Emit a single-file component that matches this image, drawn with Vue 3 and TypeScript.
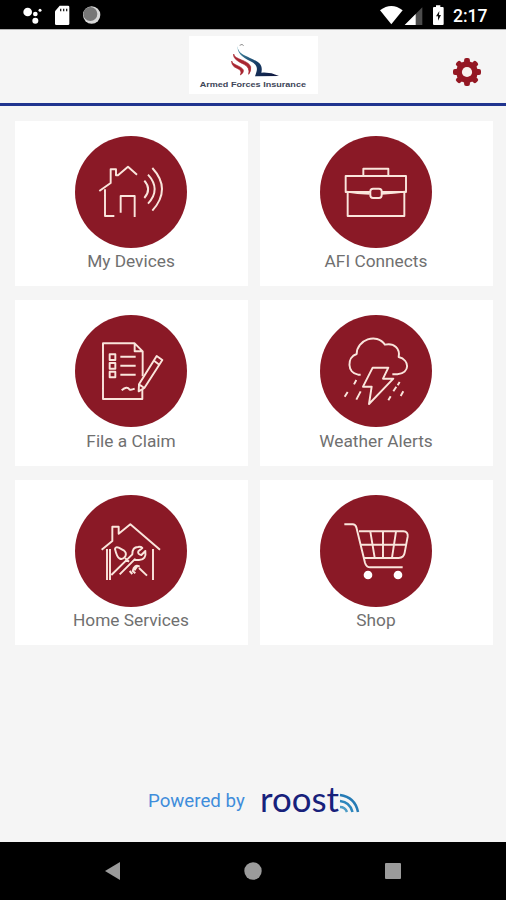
<script setup lang="ts">
interface Tile {
  id: string
  label: string
  viewBox: string
}

const tiles: Tile[] = [
  { id: 'devices', label: 'My Devices', viewBox: '15 16 336 336' },
  { id: 'connects', label: 'AFI Connects', viewBox: '15 16 336 336' },
  { id: 'claim', label: 'File a Claim', viewBox: '15 16 336 336' },
  { id: 'weather', label: 'Weather Alerts', viewBox: '15 16 336 336' },
  { id: 'services', label: 'Home Services', viewBox: '15 12 336 336' },
  { id: 'shop', label: 'Shop', viewBox: '15 12 336 336' },
]
</script>

<template>
  <div class="screen">
    <div class="status">
      <svg class="status-left" width="110" height="29" viewBox="0 0 330 87">
        <g fill="#fff">
          <circle cx="83" cy="36" r="13" />
          <circle cx="106" cy="42" r="7" />
          <circle cx="120" cy="31" r="4.5" />
          <circle cx="106" cy="62" r="9" />
          <path d="M179 17h25q4 0 4 4v50q0 4-4 4h-35q-4 0-4-4V34z" />
        </g>
        <path d="M182 26v8M191 26v8M200 26v8" stroke="#222" stroke-width="4" />
        <circle cx="275" cy="45" r="26" fill="#d8d8d8" />
        <circle cx="271" cy="42" r="21" fill="#777" />
      </svg>
      <svg class="status-icons" width="66" height="29" viewBox="30 0 198 87">
        <path d="M30 31Q64 5 98 31L64 73z" fill="#fff" />
        <path d="M157 22V75H104z" fill="#4c4c4c" />
        <path d="M137 42V75H104z" fill="#fff" />
        <path d="M198 16h13v5h7q3 0 3 3v48q0 3-3 3h-26q-3 0-3-3V24q0-3 3-3h6z" fill="#fff" />
        <path d="M208 33l-10 16h6v13l9-17h-6z" fill="#111" />
      </svg>
      <span class="clock">2:17</span>
    </div>

    <header class="header">
      <div class="brand">
        <svg width="128" height="57" viewBox="0 0 384 171">
          <defs>
            <linearGradient id="wave" x1="0" y1="0" x2="1" y2="1">
              <stop offset="0" stop-color="#4d96aa" />
              <stop offset=".5" stop-color="#173f68" />
              <stop offset="1" stop-color="#10143c" />
            </linearGradient>
          </defs>
          <path d="M152 28q8-6 12 1" fill="none" stroke="#777" stroke-width="2.5" />
          <path d="M146 31C147 52 164 57 183 66C213 79 222 87 217 110Q244 108 270 120L198 121C203 106 211 92 190 79C171 69 143 56 146 31Z" fill="url(#wave)" />
          <path d="M134 54C136 71 178 72 185 92Q187 105 179 115Q184 95 165 85C150 78 131 68 134 54Z" fill="#a82631" stroke="#a82631" stroke-width="2" />
          <path d="M128 75C130 87 158 90 163 102Q165 111 154 117Q161 103 144 97Q127 90 128 75Z" fill="#a82631" stroke="#a82631" stroke-width="2" />
          <text x="32" y="154" textLength="319" lengthAdjust="spacingAndGlyphs" class="brand-text">Armed Forces Insurance</text>
        </svg>
      </div>
      <svg class="gear" width="28" height="28" viewBox="-14 -14 28 28">
        <g fill="#941823">
          <circle r="10.8" />
          <rect v-for="n in 8" :key="n" x="-2.9" y="-14" width="5.8" height="7" rx="2" :transform="`rotate(${n * 45})`" />
        </g>
        <circle r="5.1" fill="#f8f3ee" />
      </svg>
    </header>

    <main class="grid">
      <section v-for="tile in tiles" :key="tile.id" class="tile">
        <svg class="disc" :viewBox="tile.viewBox">
          <g v-if="tile.id === 'devices'">
            <path d="M88 181L122 157V116H138V134H144L174 108L201 132M105 176V256H133M152 246V196H194V259" />
            <path d="M223 150Q246 176 223 202M234 132Q274 176 234 219M247 112Q305 175 247 240" />
          </g>
          <g v-else-if="tile.id === 'connects'">
            <path d="M145 136V114H220V136M92 136H273V184H92ZM98 184V256H268V184" />
            <path d="M94 183Q126 189 164 189M200 189Q238 188 271 183" />
            <rect x="166" y="174" width="34" height="28" rx="8" class="mask" />
          </g>
          <g v-else-if="tile.id === 'claim'">
            <path d="M217 236V268H99V101H194L218 125V200M194 102V125H217" />
            <path d="M119 134h17v17h-17zM119 160h17v17h-17zM119 186h17v17h-17zM151 141H197M151 168H197M151 195H197" />
            <path d="M155 242Q171 228 178 239Q183 242 194 237" />
            <path d="M207 224L260 139L277 151L223 235L206 245ZM207 224L223 235M250 152L268 165" class="mask" />
          </g>
          <g v-else-if="tile.id === 'weather'">
            <path d="M137 195H129C96 189 95 143 125 133C125 91 185 68 210 105C238 99 256 117 251 142C285 151 286 190 247 194H232" />
            <path d="M173 174H220L204 207H235L162 283L170 231H144Z" />
            <path d="M124 211L117 224M98 247L89 261M137 245L124 270M254 217L248 227M244 231L235 245M227 260L220 272M265 245L257 259" />
          </g>
          <g v-else-if="tile.id === 'services'">
            <path d="M95 176L127 150V107H146V128L181 100L270 176M111 174V267M120 174V267M249 174V267" />
            <path d="M135 174Q137 166 146 170L161 178Q171 186 166 196Q158 208 148 202Q141 199 135 174Z" />
            <path d="M124 252L187 190Q187 168 204 168Q212 166 217 171L205 181Q202 190 214 192L226 180Q230 206 207 207Q199 208 194 205L149 250M165 201L177 212M207 231L231 254M179 240L187 249" />
            <path d="M209 227Q193 218 188 240L196 247M203 224L193 238" />
          </g>
          <g v-else>
            <path d="M88 100H113Q121 100 124 109L150 215Q154 229 166 229H263M132 121H265Q280 122 278 137L269 185Q267 200 251 201H149M139 161H274M166 122L179 200M204 122V200M243 122L231 200" />
            <circle cx="159" cy="252" r="13" class="wheel" />
            <circle cx="249" cy="252" r="13" class="wheel" />
          </g>
        </svg>
        <span class="label">{{ tile.label }}</span>
      </section>
    </main>

    <footer class="powered">
      <span class="powered-text">Powered by</span>
      <svg width="104" height="46" viewBox="0 0 104 46">
        <text x="-1" y="34" textLength="79" lengthAdjust="spacingAndGlyphs" class="roost">roost</text>
        <g fill="none" stroke="#2b86bd" stroke-width="2.5">
          <path d="M79 17Q94 19 97 34" stroke="#267bb5" />
          <path d="M79 23Q89 24 91.500 34" />
          <path d="M79 29Q84 29 86 34" stroke="#4d9cc6" />
        </g>
      </svg>
    </footer>

    <nav class="nav">
      <svg width="16" height="18" viewBox="0 0 16 18"><path d="M0 9L15 0V18Z" /></svg>
      <svg width="18" height="18" viewBox="0 0 18 18"><circle cx="9" cy="9" r="8.700" /></svg>
      <svg width="16" height="16" viewBox="0 0 16 16"><rect width="16" height="16" rx="1" /></svg>
    </nav>
  </div>
</template>

<style>
body { margin: 0; }
</style>

<style scoped>
.screen {
  display: flex;
  flex-direction: column;
  box-sizing: border-box;
  width: 506px;
  height: 900px;
  background: #f5f5f5;
  font-family: Roboto, "Liberation Sans", sans-serif;
  overflow: hidden;
}
.status {
  display: flex;
  align-items: center;
  flex: none;
  height: 29px;
  background: #000;
  border-bottom: 1px solid #b0b0b0;
}
.status-icons { margin-left: 270px; }
.status-left { margin: 0; }
.clock {
  margin-left: 7px;
  padding-top: 3px;
  color: #fff;
  font-size: 17.500px;
  font-weight: 500;
  line-height: 20px;
}
.header {
  display: grid;
  grid-template-columns: 1fr 128px 1fr;
  flex: none;
  box-sizing: border-box;
  height: 76px;
  padding-top: 6px;
  border-bottom: 3px solid #20348f;
}
.brand {
  grid-column: 2;
  width: 129px;
  height: 58px;
  background: #fff;
}
.brand-text {
  font: 700 19px "Liberation Sans", sans-serif;
  fill: #3d4557;
}
.gear {
  justify-self: end;
  margin: 22px 25px 0 0;
}
.grid {
  display: grid;
  grid-template-columns: 233px 233px;
  grid-auto-rows: 165.500px;
  gap: 14px 12px;
  padding: 14.500px 0 0 15px;
  flex: none;
}
.tile {
  display: flex;
  flex-direction: column;
  align-items: center;
  box-sizing: border-box;
  padding-right: 1px;
  background: #fff;
}
.disc {
  width: 112px;
  height: 112px;
  margin-top: 15px;
  border-radius: 50%;
  background: #8a1926;
  fill: none;
  stroke: #fae5dc;
  stroke-width: 5.800;
  stroke-linejoin: round;
}
.mask { fill: #8a1926; }
.wheel { fill: #fff; stroke: none; }
.label {
  margin-top: 2.500px;
  color: #707070;
  font-size: 17.300px;
  line-height: 22px;
}
.powered {
  display: flex;
  align-items: center;
  flex: none;
  height: 46px;
  margin: auto 0 18px 148px;
}
.powered-text {
  width: 97px;
  margin-right: 16px;
  color: #3f8ddb;
  font-size: 18.700px;
  white-space: nowrap;
}
.roost {
  font: 400 34.500px Lato, sans-serif;
  fill: #17217b;
}
.nav {
  display: flex;
  align-items: center;
  justify-content: space-between;
  flex: none;
  box-sizing: border-box;
  height: 58px;
  padding: 0 105px 0 105px;
  background: #000;
  fill: #9b9b9b;
}
</style>
